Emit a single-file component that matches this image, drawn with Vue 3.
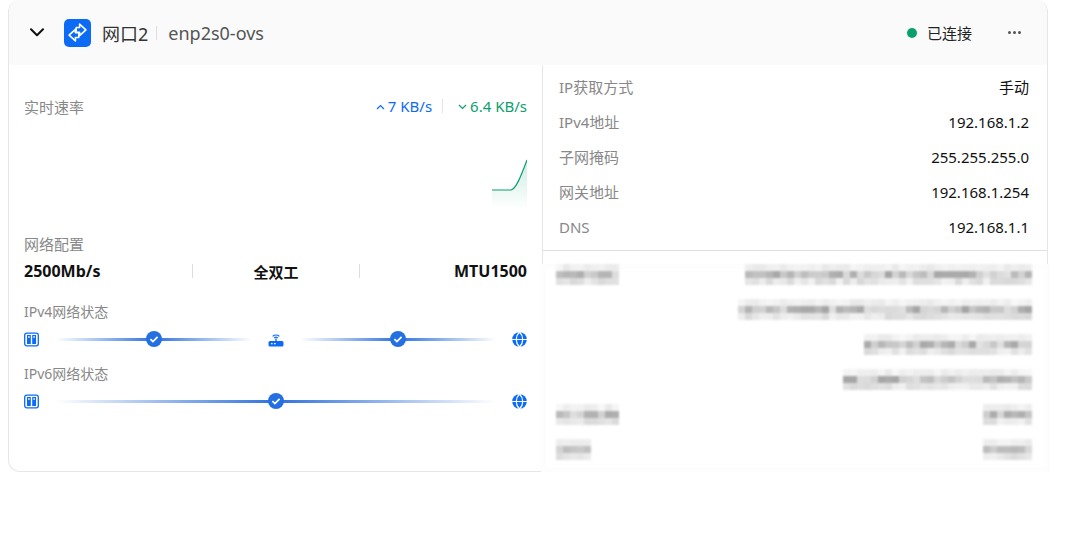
<script setup>
const conf = ['2500Mb/s', '全双工', 'MTU1500']
const info = [
  ['IP获取方式', '手动'],
  ['IPv4地址', '192.168.1.2'],
  ['子网掩码', '255.255.255.0'],
  ['网关地址', '192.168.1.254'],
  ['DNS', '192.168.1.1']
]
let seed = 7
const rnd = () => {
  seed = (seed * 16807) % 2147483647
  return seed / 2147483647
}
const bar = (n) => {
  const base = [0.07, 0.3, 0.13]
  const cells = []
  for (let r = 0; r < 3; r++) {
    for (let c = 0; c < n; c++) {
      const v = base[r] * (0.5 + rnd())
      cells.push(v.toFixed(3))
    }
  }
  return { n, cells }
}
const blurRows = [
  [9, 41], [0, 42], [0, 24], [0, 27], [9, 7], [5, 7]
].map(([l, r]) => ({ left: l ? bar(l) : null, right: bar(r) }))
</script>

<template>
  <div class="card">
    <header class="head">
      <svg class="chev" viewBox="0 0 14 9" width="14" height="9"><path d="M1 1.2 7 7.2l6-6" fill="none" stroke="#111" stroke-width="2" stroke-linecap="round" stroke-linejoin="round"/></svg>
      <span class="logo">
        <svg viewBox="0 0 20 20" width="21" height="21"><path d="M12 2 18 7.5 12 13V9.8H8.8V5.2H12zM8 7 2 12.5 8 18V14.8h3.2V10.2H8z" fill="none" stroke="#fff" stroke-width="1.5" stroke-linejoin="round"/></svg>
      </span>
      <span class="name">网口2</span>
      <i class="hsep"></i>
      <span class="dev">enp2s0-ovs</span>
      <span class="dot"></span>
      <span class="state">已连接</span>
      <span class="more"><b></b><b></b><b></b></span>
    </header>

    <div class="body">
      <section class="left">
        <div class="speed">
          <span class="muted">实时速率</span>
          <span class="rates">
            <span class="up"><svg viewBox="0 0 9 6" width="9" height="6"><path d="M1 5l3.5-3.5L8 5" fill="none" stroke="currentColor" stroke-width="1.2"/></svg>7 KB/s</span>
            <i class="rsep"></i>
            <span class="down"><svg viewBox="0 0 9 6" width="9" height="6"><path d="M1 1l3.5 3.5L8 1" fill="none" stroke="currentColor" stroke-width="1.2"/></svg>6.4 KB/s</span>
          </span>
        </div>
        <svg class="chart" viewBox="0 0 35 57" width="35" height="57">
          <defs><linearGradient id="fade" x1="0" y1="0" x2="0" y2="1"><stop offset="0" stop-color="#0aa06e" stop-opacity=".2"/><stop offset="1" stop-color="#0aa06e" stop-opacity="0"/></linearGradient></defs>
          <path d="M0 38h19c5-1 10-14 16-30v49H0z" fill="url(#fade)"/>
          <path d="M0 38h19c5-1 10-14 16-30" fill="none" stroke="#0aa06e" stroke-width="1.2"/>
        </svg>

        <div class="muted conf-label">网络配置</div>
        <div class="conf">
          <div v-for="(c, i) in conf" :key="c" class="cell">
            <strong :class="{ cjk: i === 1 }">{{ c }}</strong>
          </div>
        </div>

        <div class="muted net-label first">IPv4网络状态</div>
        <div class="net">
          <svg class="ic first-ic" viewBox="0 0 15 15" width="15" height="15"><rect x=".7" y="1.2" width="13.6" height="12.6" rx="2" fill="none" stroke="#0b6bf5" stroke-width="1.3"/><rect x="3" y="3" width="3.8" height="9" fill="#0b6bf5"/><rect x="8.2" y="3" width="3.8" height="9" fill="#0b6bf5"/><rect x="4.3" y="4" width="1.2" height="2" fill="#fff"/><rect x="9.5" y="4" width="1.2" height="2" fill="#fff"/></svg>
          <div class="line"><span class="tick"><svg viewBox="0 0 16 16" width="16" height="16"><path d="M4.4 8.2l2.5 2.4 4.7-4.8" fill="none" stroke="#fff" stroke-width="1.7"/></svg></span></div>
          <svg class="ic" viewBox="0 0 16 15" width="16" height="15"><path d="M4.6 4.4a5 5 0 0 1 6.8 0M6.2 6a2.8 2.8 0 0 1 3.6 0" fill="none" stroke="#0b6bf5" stroke-width="1.2"/><rect x="7.3" y="6.5" width="1.4" height="3" fill="#0b6bf5"/><rect x=".5" y="9" width="15" height="5.4" rx="1.5" fill="#0b6bf5"/><rect x="3" y="11" width="1.6" height="1.3" fill="#fff"/><rect x="6" y="11" width="1.6" height="1.3" fill="#fff"/></svg>
          <div class="line"><span class="tick"><svg viewBox="0 0 16 16" width="16" height="16"><path d="M4.4 8.2l2.5 2.4 4.7-4.8" fill="none" stroke="#fff" stroke-width="1.7"/></svg></span></div>
          <svg class="ic" viewBox="0 0 15 15" width="15" height="15"><circle cx="7.5" cy="7.5" r="7.3" fill="#0b6bf5"/><path d="M0 7.5h15M7.5 0c-4.3 4-4.3 11 0 15M7.5 0c4.3 4 4.3 11 0 15" fill="none" stroke="#fff" stroke-width="1.2"/></svg>
        </div>

        <div class="muted net-label">IPv6网络状态</div>
        <div class="net">
          <svg class="ic first-ic" viewBox="0 0 15 15" width="15" height="15"><rect x=".7" y="1.2" width="13.6" height="12.6" rx="2" fill="none" stroke="#0b6bf5" stroke-width="1.3"/><rect x="3" y="3" width="3.8" height="9" fill="#0b6bf5"/><rect x="8.2" y="3" width="3.8" height="9" fill="#0b6bf5"/><rect x="4.3" y="4" width="1.2" height="2" fill="#fff"/><rect x="9.5" y="4" width="1.2" height="2" fill="#fff"/></svg>
          <div class="line"><span class="tick"><svg viewBox="0 0 16 16" width="16" height="16"><path d="M4.4 8.2l2.5 2.4 4.7-4.8" fill="none" stroke="#fff" stroke-width="1.7"/></svg></span></div>
          <svg class="ic" viewBox="0 0 15 15" width="15" height="15"><circle cx="7.5" cy="7.5" r="7.3" fill="#0b6bf5"/><path d="M0 7.5h15M7.5 0c-4.3 4-4.3 11 0 15M7.5 0c4.3 4 4.3 11 0 15" fill="none" stroke="#fff" stroke-width="1.2"/></svg>
        </div>
      </section>

      <section class="right">
        <div class="rows">
          <div v-for="r in info" :key="r[0]" class="row">
            <span class="muted">{{ r[0] }}</span>
            <span class="val">{{ r[1] }}</span>
          </div>
        </div>
      </section>
    </div>

    <div class="mask">
      <div v-for="(r, i) in blurRows" :key="i" class="mrow">
        <div v-if="r.left" class="cells" :style="{ gridTemplateColumns: `repeat(${r.left.n}, 7px)` }">
          <span v-for="(o, j) in r.left.cells" :key="j" :style="{ opacity: o }"></span>
        </div>
        <div class="cells end" :style="{ gridTemplateColumns: `repeat(${r.right.n}, 7px)` }">
          <span v-for="(o, j) in r.right.cells" :key="j" :style="{ opacity: o }"></span>
        </div>
      </div>
    </div>
  </div>
</template>

<style scoped>
.card {
  position: relative;
  margin-left: 8px;
  width: 1040px;
  height: 472px;
  box-sizing: border-box;
  border: 1px solid #e6e6e6;
  border-top: 0;
  border-radius: 12px;
  background: #fff;
  font-family: "Noto Sans", "Noto Sans CJK SC", sans-serif;
  font-size: 15px;
  color: #111;
}
.head {
  height: 65px;
  display: flex;
  align-items: center;
  background: #fafafa;
  border-radius: 12px 12px 0 0;
  padding-left: 21px;
  padding-right: 25px;
  box-sizing: border-box;
}
.logo {
  margin-left: 20px;
  width: 27px;
  height: 28px;
  border-radius: 5px;
  background: #0b6bf5;
  display: flex;
  align-items: center;
  justify-content: center;
}
.name { margin-left: 11px; font-size: 18px; color: #333; }
.hsep { width: 1px; height: 14px; background: #ddd; margin: 0 11px 0 8px; }
.dev { font-size: 18px; color: #555; }
.dot { margin-left: auto; width: 10px; height: 10px; border-radius: 50%; background: #0aa06e; }
.state { margin-left: 10px; color: #222; }
.more { margin-left: 36px; display: flex; gap: 2px; width: 14px; }
.more b { width: 3px; height: 3px; border-radius: 50%; background: #555; }

.body { display: flex; height: 406px; }
.left { width: 534px; flex: none; box-sizing: border-box; padding: 0 15px; border-right: 1px solid #e6e6e6; }
.muted { color: #888; }
.speed { display: flex; justify-content: space-between; align-items: center; height: 20px; margin-top: 31px; }
.rates { display: flex; align-items: center; }
.up { color: #0b6bf5; }
.down { color: #0aa06e; }
.up svg, .down svg { margin-right: 3px; vertical-align: 2px; }
.rsep { width: 1px; height: 14px; background: #e4e4e4; margin: 0 15px 0 10px; }
.chart { display: block; margin: 36px 0 0 auto; }
.conf-label { margin-top: 25px; line-height: 20px; }
.conf { display: grid; grid-template-columns: 1fr 1fr 1fr; align-items: center; height: 20px; margin-top: 7px; }
.cell { height: 14px; display: flex; align-items: center; justify-content: center; border-left: 1px solid #ddd; }
.cell:first-child { border-left: 0; justify-content: flex-start; }
.cell:last-child { justify-content: flex-end; }
.conf strong { font-weight: 700; color: #111; font-size: 16px; }
.conf strong.cjk { font-size: 15px; }
.net-label { line-height: 20px; margin-top: 15px; font-size: 14px; }
.net-label.first { margin-top: 21px; }
.net { display: flex; align-items: center; gap: 16px; height: 20px; margin-top: 7px; }
.ic { flex: none; }
.first-ic { margin-right: 1px; }
.line {
  flex: 1;
  height: 3px;
  position: relative;
  background: linear-gradient(90deg, rgba(42,111,220,0) 0%, #2f72dc 50%, rgba(42,111,220,0) 100%);
}
.tick {
  position: absolute;
  left: 50%;
  top: 50%;
  width: 16px;
  height: 16px;
  margin: -8px 0 0 -8px;
  border-radius: 50%;
  background: #2470e0;
}
.tick svg { display: block; }

.right { flex: 1; }
.rows { padding: 4px 18px 5.5px 16px; border-bottom: 1px solid #e0e0e0; }
.row { display: flex; justify-content: space-between; align-items: center; height: 35px; }
.val { color: #111; }

.mask {
  position: absolute;
  left: 532px;
  right: -3px;
  top: 264px;
  height: 208px;
  box-sizing: border-box;
  padding: 0 18px 0 15px;
  background: #fff;
  box-shadow: inset 0 0 0 5px #fdfdfd;
}
.mrow { display: flex; justify-content: space-between; height: 35px; }
.cells { display: grid; grid-auto-rows: 7px; height: 21px; filter: blur(.8px); }
.cells.end { margin-left: auto; }
.cells span { background: #333; }
</style>
